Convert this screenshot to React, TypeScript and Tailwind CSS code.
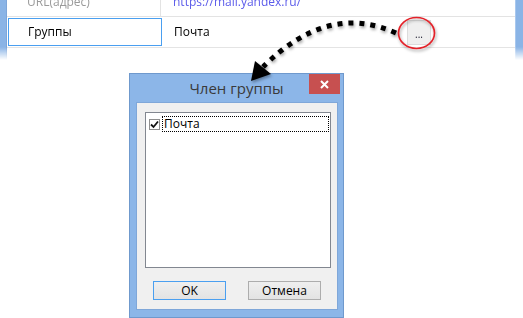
import React from 'react';

const Check = () => (
    <svg width="9" height="9" viewBox="0 0 9 9">
        <path d="M1 4.5 L3.5 7 L8 1.5" fill="none" stroke="#111" strokeWidth="1.8" />
    </svg>
);

const App: React.FC = () => {
    return (
        <div className="relative w-[523px] h-[318px] overflow-hidden bg-white font-['Open_Sans',sans-serif] text-[12px] text-black">
            {/* torn-off piece of the main window */}
            <div className="h-[60px] flex [mask-image:linear-gradient(to_bottom,black_0,black_47px,transparent_60px)]">
                <div className="w-[7px] bg-[#8ab4e6] border-r border-[#7ea6d9]" />
                <div className="flex-1 -mt-[13px] flex flex-col">
                    <div className="h-[30px] flex border-b border-[#e3e3e3]">
                        <div className="w-[154px] flex items-center pl-[20px] border-r border-[#e3e3e3] text-[#9a9a9a]">URL(адрес)</div>
                        <div className="flex-1 flex items-center pl-[12px] text-[#5b5bea]">https://mail.yandex.ru/</div>
                    </div>
                    <div className="h-[31px] flex border-b border-[#e3e3e3]">
                        <div className="w-[154px] my-px ml-px flex items-center pl-[19px] border border-[#4a9ff0]">Группы</div>
                        <div className="flex-1 flex items-center pl-[12px]">
                            <span>Почта</span>
                            <div className="ml-auto mr-[84px] w-[24px] h-[25px] bg-[#efefef] border border-[#dcdcdc] flex items-end justify-center pb-[5px] text-[10px] leading-none text-[#223]">...</div>
                        </div>
                    </div>
                    <div className="flex-1" />
                </div>
                <div className="w-[8px] bg-[#8ab4e6] border-l border-[#a9c8ee]" />
            </div>

            {/* dialog */}
            <div className="ml-[129px] mt-[13px] w-[215px] h-[245px] bg-[#8cb6e8] border border-[#6f99cd] flex flex-col">
                <div className="h-[28px] grid">
                    <div className="col-start-1 row-start-1 justify-self-center pt-[3px] text-[15px] text-[#3a3a3a]">Член группы</div>
                    <div className="col-start-1 row-start-1 justify-self-end mr-[3px] w-[31px] h-[20px] bg-[#c75050] flex items-center justify-center">
                        <svg width="9" height="9" viewBox="0 0 9 9">
                            <path d="M1 1 L8 8 M8 1 L1 8" stroke="white" strokeWidth="2" />
                        </svg>
                    </div>
                </div>
                <div className="ml-[6px] w-[202px] h-[208px] bg-[#f0f0f0] border border-[#7fa7d9] flex flex-col">
                    <div className="ml-[8px] mt-[9px] w-[186px] h-[156px] bg-white border border-[#828790] pl-[3px] pt-[3px]">
                        <div className="flex items-center h-[16px]">
                            <div className="w-[11px] h-[11px] border border-[#8f8f8f] bg-white flex items-center justify-center">
                                <Check />
                            </div>
                            <div className="ml-[2px] w-[167px] h-[16px] border border-dotted border-black flex items-center pl-[1px] leading-none">Почта</div>
                        </div>
                    </div>
                    <div className="mt-[13px] ml-[16px] flex gap-[22px]">
                        <div className="w-[73px] h-[19px] border border-[#4a9ff0] bg-[linear-gradient(#efefef,#e3e3e3)] flex items-center justify-center leading-none">OK</div>
                        <div className="w-[73px] h-[19px] border border-[#adadad] bg-[linear-gradient(#efefef,#e3e3e3)] flex items-center justify-center leading-none">Отмена</div>
                    </div>
                </div>
            </div>

            {/* annotation overlay */}
            <svg className="absolute inset-0 pointer-events-none" width="523" height="318">
                <defs>
                    <filter id="sh" x="-20%" y="-20%" width="140%" height="140%">
                        <feDropShadow dx="1" dy="2" stdDeviation="1.5" floodColor="#000" floodOpacity="0.35" />
                    </filter>
                </defs>
                <g filter="url(#sh)">
                    <path d="M396 33 Q328 2 263 67" fill="none" stroke="#000" strokeWidth="5" strokeDasharray="5 6" />
                    <polygon points="251,81 255,61 271,74" fill="#000" />
                </g>
                <ellipse cx="416.5" cy="33" rx="18" ry="15.5" fill="none" stroke="#e3242b" strokeWidth="1.7" filter="url(#sh)" />
            </svg>
        </div>
    );
};

export default App;
